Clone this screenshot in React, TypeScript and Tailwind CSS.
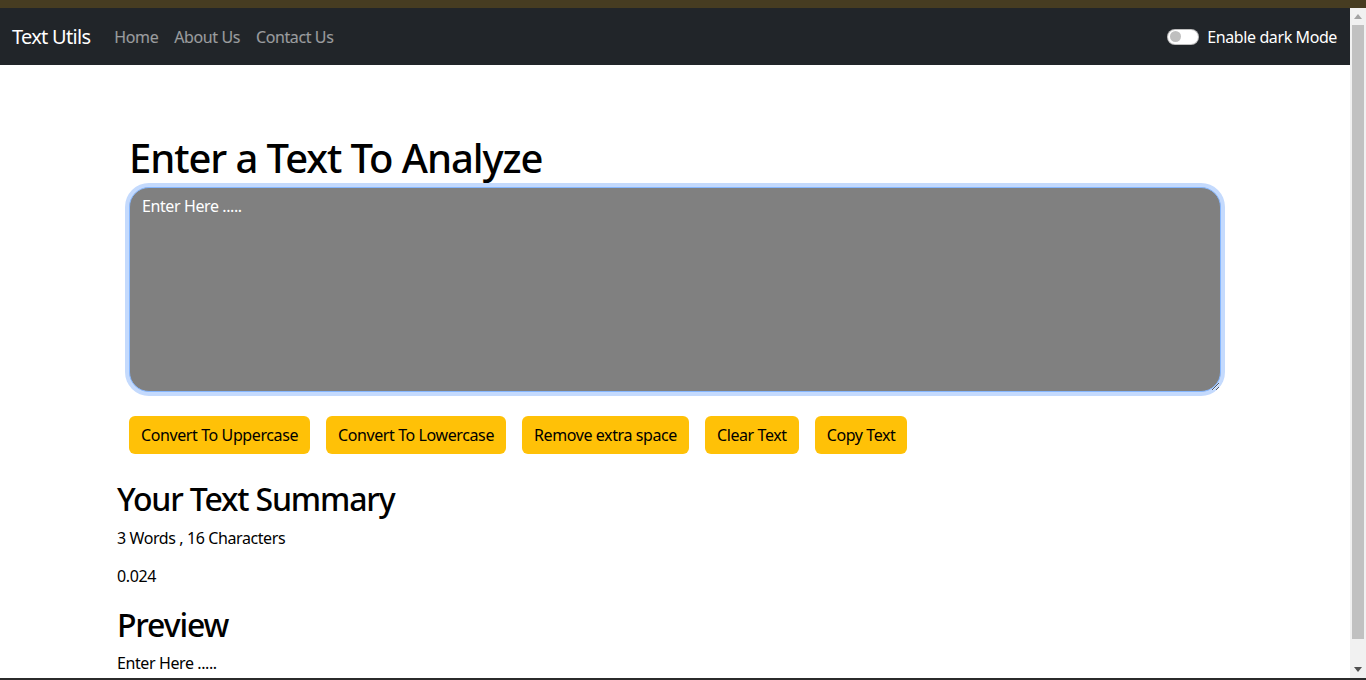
import React from "react";

const buttons = [
  "Convert To Uppercase",
  "Convert To Lowercase",
  "Remove extra space",
  "Clear Text",
  "Copy Text",
];

export default function App() {
  return (
    <div className="h-[680px] overflow-hidden flex flex-col bg-white font-['Segoe_UI','Noto_Sans',sans-serif] tracking-[-0.025em] text-black">
      <div className="h-[8px] shrink-0 bg-[#463c21]" />
      <div className="flex flex-1 min-h-0">
        <div className="flex-1 min-w-0 flex flex-col">
          <nav className="h-[57px] shrink-0 bg-[#212529] flex items-center pl-3 pr-[13px]">
            <span className="text-[20px] text-white mr-[16px] tracking-[-0.035em]">Text Utils</span>
            <div className="flex">
              <a className="text-[16px] text-white/55 px-2">Home</a>
              <a className="text-[16px] text-white/55 px-2">About Us</a>
              <a className="text-[16px] text-white/55 px-2">Contact Us</a>
            </div>
            <div className="ml-auto flex items-center gap-2">
              <span className="w-[32px] h-[16px] rounded-full bg-white border border-black/25 flex items-center px-[2px]">
                <span className="w-[11px] h-[11px] rounded-full bg-[#bfbfbf]" />
              </span>
              <span className="text-[16px] text-white">Enable dark Mode</span>
            </div>
          </nav>
          <main className="pl-[117px] pr-[117px]">
            <div className="pl-[12px] pr-[12px] mt-[69px]">
              <h1 className="text-[40px] leading-[48px] font-medium tracking-[-0.027em]">Enter a Text To Analyze</h1>
              <textarea
                rows={8}
                defaultValue="Enter Here ....."
                className="mt-[5px] block w-full h-[205px] bg-[#808080] text-white text-[16px] leading-[24px] px-[12px] py-[6px] rounded-[20px] border border-[#86b7fe] shadow-[0_0_0_4px_#c4dafd] outline-none tracking-[-0.025em]"
              />
              <div className="flex gap-4 mt-[24px]">
                {buttons.map((b) => (
                  <button
                    key={b}
                    className="h-[38px] px-[12px] rounded-[6px] bg-[#ffc107] text-[16px] text-black tracking-[-0.025em]"
                  >
                    {b}
                  </button>
                ))}
              </div>
            </div>
            <div className="mt-[26px]">
              <h2 className="text-[32px] leading-[38px] font-medium tracking-[-0.036em]">Your Text Summary</h2>
              <p className="mt-[8px] text-[16px] leading-[24px]">3 Words , 16 Characters</p>
              <p className="mt-[14px] text-[16px] leading-[24px]">0.024</p>
              <h2 className="mt-[18px] text-[32px] leading-[38px] font-medium tracking-[-0.036em]">Preview</h2>
              <p className="mt-[7px] text-[16px] leading-[24px]">Enter Here .....</p>
            </div>
          </main>
        </div>
        <div className="w-[16px] shrink-0 bg-[#f1f1f1] flex flex-col items-center">
          <div className="h-[17px] w-full flex items-center justify-center">
            <svg width="8" height="5" viewBox="0 0 8 5"><path d="M0 5 L4 0 L8 5 Z" fill="#a3a3a3" /></svg>
          </div>
          <div className="flex-1 w-[12px] bg-[#c1c1c1] mb-[22px]" />
          <div className="h-[17px] w-full flex items-center justify-center">
            <svg width="8" height="5" viewBox="0 0 8 5"><path d="M0 0 L8 0 L4 5 Z" fill="#505050" /></svg>
          </div>
        </div>
      </div>
      <div className="h-[2px] shrink-0 bg-[#2b2b2b]" />
    </div>
  );
}
